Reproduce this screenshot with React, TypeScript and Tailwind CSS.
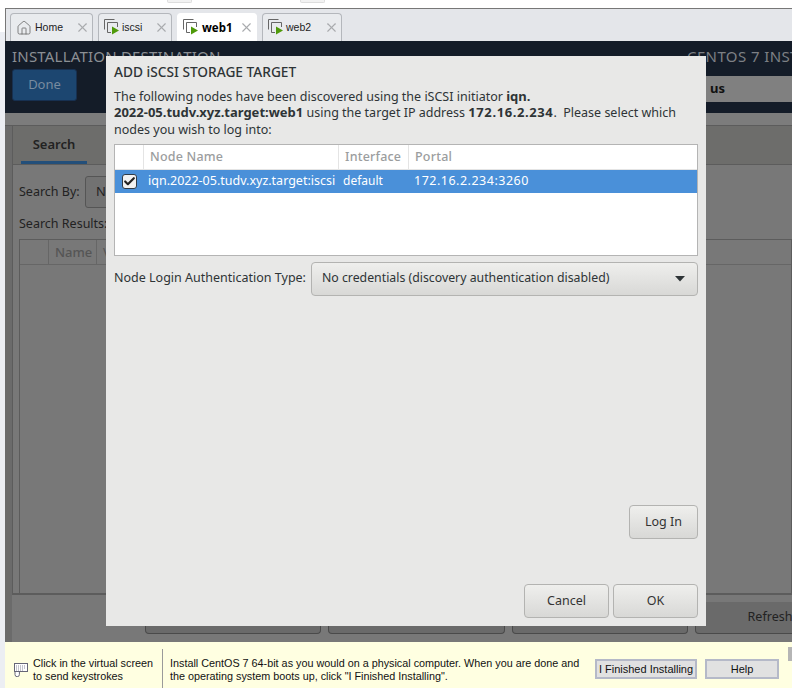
import { Home, X, Check } from 'lucide-react'

const modalFont = { fontFamily: '"Noto Sans", sans-serif' }
const hintFont = { fontFamily: '"Liberation Sans", Arial, sans-serif' }

// VM tab icon: stacked windows with a green play arrow
function VmIcon() {
  return (
    <svg width="17" height="17" viewBox="0 0 17 17" fill="none" className="shrink-0">
      <path d="M0.5 10.5V0.5H10.5" stroke="#666" />
      <path d="M3.5 13.5V3.5H13.5V8" stroke="#666" />
      <path d="M3.5 13.5H7" stroke="#666" />
      <path d="M8 7.5L15 11.5L8 15.5Z" fill="#4f9a0a" />
    </svg>
  )
}

function Tab({ label, active, home, width }: { label: string; active?: boolean; home?: boolean; width: string }) {
  return (
    <div
      className={`flex h-[28px] items-center rounded-t-[4px] border border-b-0 pr-[2px] pl-[5px] ${width} ${
        active ? 'border-white bg-white' : 'border-[#b4b7bc] bg-[#e9ebee]'
      }`}
    >
      {home ? <Home size={16} strokeWidth={1.2} className="mr-[2px] text-[#666]" /> : <VmIcon />}
      {active ? (
        <span className="ml-[2px] text-[11.5px] font-bold text-black">{label}</span>
      ) : (
        <span className="ml-[1px] text-[10.5px] text-[#222]" style={hintFont}>
          {label}
        </span>
      )}
      <X size={15} strokeWidth={1.8} className="ml-auto text-[#a9abae]" />
    </div>
  )
}

function DimButton({ width, label }: { width: string; label?: string }) {
  return (
    <div className={`flex h-[32px] shrink-0 items-center justify-center rounded-b-[4px] border border-t-0 border-[#4a4a4a] bg-[#6a6a6a] text-[12.5px] text-[#222] ${width}`}>
      {label}
    </div>
  )
}

function LightButton({ label, width }: { label: string; width: string }) {
  return (
    <button className={`h-[34px] rounded-[4px] border border-[#b3b3b1] bg-gradient-to-b from-[#efefed] to-[#d8d8d6] text-[12.5px] text-[#333] ${width}`}>
      {label}
    </button>
  )
}

export default function App() {
  return (
    <div className="relative flex h-[688px] w-[792px] overflow-hidden bg-white" style={modalFont}>
      {/* left window strip */}
      <div className="mt-[32px] h-[656px] w-[5px] shrink-0 bg-[#eceef3]" />

      <div className="flex min-w-0 flex-1 flex-col">
        {/* leftovers of the toolbar above */}
        <div className="flex h-2 shrink-0 pl-[162px]">
          <div className="h-[3px] w-[25px] rounded-b-[2px] border border-t-0 border-[#ddd] bg-[#f2f2f2]" />
          <div className="ml-[108px] h-[3px] w-[25px] rounded-b-[2px] border border-t-0 border-[#ddd] bg-[#f2f2f2]" />
        </div>

        {/* tab bar */}
        <div className="flex h-[33px] shrink-0 items-end gap-[5px] border-t border-l border-[#777] bg-[#e4e6ea] pl-[4px]">
          <Tab label="Home" home width="w-[83px]" />
          <Tab label="iscsi" width="w-[74px]" />
          <Tab label="web1" active width="w-[80px]" />
          <Tab label="web2" width="w-[80px]" />
        </div>

        {/* dimmed installer screen */}
        <div className="flex h-[601px] shrink-0 flex-col overflow-hidden bg-[#6b6b6b]">
          <div className="flex h-[72px] shrink-0 bg-[#141c28] pl-[7px]">
            <div className="flex flex-col">
              <div className="mt-[6px] text-[15px] leading-[18px] tracking-[0.2px] whitespace-nowrap text-[#8b8f94]">INSTALLATION DESTINATION</div>
              <div className="mt-[4px] flex h-[32px] w-[65px] items-center justify-center rounded-[3px] border border-[#173050] bg-[#1c4670] text-[13px] text-[#788b9f]">
                Done
              </div>
            </div>
            <div className="ml-auto flex w-[192px] flex-col overflow-hidden pt-[6px]">
              <div className="pl-[87px] text-[15px] leading-[18px] tracking-[0.4px] whitespace-nowrap text-[#7d8085]">CENTOS 7 INST</div>
              <div className="mt-[11px] flex h-[26px] items-center bg-[#808080] pl-[110px] text-[13px] font-bold text-[#111]">us</div>
            </div>
          </div>
          <div className="h-[13px] shrink-0 border-b border-[#5c5c5c] bg-[#7c7c7c]" />

          {/* main spoke content */}
          <div className="flex min-h-0 flex-1 flex-col pl-[7px]">
            <div className="flex min-h-0 flex-1 flex-col border-l border-[#5c5c5c] bg-[#787878]">
              <div className="flex h-[39px] shrink-0 border-b border-[#5c5c5c] bg-[#6d6d6b] pl-[8px]">
                <div className="flex w-[66px] items-center justify-center border-b-[3px] border-[#234f7a] pt-[2px] text-[13px] font-semibold text-[#222]">Search</div>
              </div>
              <div className="flex min-h-0 flex-1 flex-col pl-[6px]">
                <div className="mt-[11px] flex items-center">
                  <span className="mr-[6px] w-[60px] text-[12.5px] whitespace-nowrap text-[#222]">Search By:</span>
                  <div className="flex h-[32px] w-[60px] items-center rounded-[3px] border border-[#555] bg-[#727272] pl-[10px] text-[13px] text-[#222]">N</div>
                </div>
                <div className="mt-[7px] text-[12.5px] leading-[18px] text-[#222]">Search Results:</div>
                <div className="mt-[6px] flex-1 border border-b-0 border-[#5c5c5c] bg-[#787878]">
                  <div className="flex h-[25px] border-b border-[#666]">
                    <div className="w-[29px] border-r border-[#666]" />
                    <div className="w-[48px] border-r border-[#666] pl-[6px] text-[13px] leading-[24px] font-medium text-[#555]">Name</div>
                    <div className="pl-[6px] text-[13px] leading-[24px] text-[#555]">V</div>
                  </div>
                </div>
              </div>
            </div>
            <div className="flex h-[49px] shrink-0 gap-[7px] border-t-2 border-[#5c5c5c] bg-[#787878] pt-[7px] pl-[133px]">
              <DimButton width="w-[176px]" />
              <DimButton width="w-[177px]" />
              <DimButton width="w-[176px]" />
              <DimButton width="w-[150px]" label="Refresh" />
            </div>
          </div>
        </div>

        {/* VMware hint bar */}
        <div className="flex h-[46px] shrink-0 items-center bg-[#ffffe1] pt-[8px] text-[10.8px] leading-[13px] text-[#111]" style={hintFont}>
          <div className="mr-[4px] ml-[8px] shrink-0">
            <svg width="16" height="16" viewBox="0 0 16 16" fill="none">
              <rect x="1.5" y="2.5" width="13" height="8" fill="#fff" stroke="#667" />
              <path d="M3 5h10M3 7h10M3 9h7" stroke="#889" strokeDasharray="1 1" />
              <path d="M2 11v2.5a2.2 2.2 0 0 0 4.4 0V11" fill="#fff" stroke="#667" />
            </svg>
          </div>
          <div className="w-[120px] shrink-0 pt-[2px] whitespace-nowrap">
            Click in the virtual screen
            <br />
            to send keystrokes
          </div>
          <div className="mr-[7px] ml-[9px] h-[39px] w-px shrink-0 self-end bg-[#9a9a9a]" />
          <div className="w-[425px] shrink-0 pt-[2px] whitespace-nowrap">
            Install CentOS 7 64-bit as you would on a physical computer. When you are done and
            <br />
            the operating system boots up, click "I Finished Installing".
          </div>
          <button className="h-[20px] w-[102px] shrink-0 border-2 border-[#b5b9c8] bg-[#e1e1e1] text-[11px] whitespace-nowrap">I Finished Installing</button>
          <button className="ml-[8px] h-[20px] w-[74px] shrink-0 border-2 border-[#b5b9c8] bg-[#e1e1e1] text-[11px]">Help</button>
        </div>
      </div>

      {/* scrollbar stub at the right edge */}
      <div className="absolute top-[647px] right-0 h-[14px] w-[4px] bg-[#b5b5b5]" />

      {/* modal dialog */}
      <div className="absolute top-[56px] left-[106px] flex h-[570px] w-[600px] flex-col bg-[#e8e8e7] px-[8px] text-[#2e3436]">
        <h2 className="mt-[7px] text-[13.7px] leading-[18px] font-medium whitespace-nowrap">ADD iSCSI STORAGE TARGET</h2>
        <p className="mt-[7.5px] h-[50px] text-[12.5px] leading-[16.5px]">
          The following nodes have been discovered using the iSCSI initiator <b className="text-[13px] leading-none">iqn.</b>
          <br />
          <b className="text-[13px] leading-none">2022-05.tudv.xyz.target:web1</b> using the target IP address <b className="text-[13px] leading-none tracking-[0.6px]">172.16.2.234</b>.&nbsp; Please select which
          <br />
          nodes you wish to log into:
        </p>

        <div className="mt-[5px] h-[112px] w-[584px] shrink-0 border border-[#b4b4b4] bg-white">
          <div className="flex h-[25px] border-b border-[#e4e4e4] text-[12.5px] leading-[23px] font-medium tracking-[0.2px] text-[#9b9d9e]">
            <div className="w-[29px] border-r border-[#e4e4e4]" />
            <div className="w-[195px] border-r border-[#e4e4e4] pl-[6px]">Node Name</div>
            <div className="w-[70px] border-r border-[#e4e4e4] pl-[6px]">Interface</div>
            <div className="pl-[6px]">Portal</div>
          </div>
          <div className="flex h-[23px] items-center bg-[#4a90d9] text-[12.5px] text-white">
            <div className="flex w-[29px] justify-center">
              <span className="flex h-[15px] w-[15px] items-center justify-center rounded-[3px] border border-[#2f3b47] bg-[#f2f2f2]">
                <Check size={13} strokeWidth={4} className="text-[#222]" />
              </span>
            </div>
            <div className="w-[195px] pl-[4px] whitespace-nowrap">iqn.2022-05.tudv.xyz.target:iscsi</div>
            <div className="w-[70px] pl-[4px] text-[12px]">default</div>
            <div className="pl-[5px] tracking-[0.5px]">172.16.2.234:3260</div>
          </div>
        </div>

        <div className="mt-[6px] flex items-center">
          <span className="mr-[5px] text-[12.5px] whitespace-nowrap">Node Login Authentication Type:</span>
          <div className="flex h-[34px] flex-1 items-center rounded-[4px] border border-[#b3b3b1] bg-gradient-to-b from-[#efefed] to-[#d8d8d6] pr-[12px] pl-[10px] text-[12.3px]">
            No credentials (discovery authentication disabled)
            <svg width="10" height="6" viewBox="0 0 10 6" className="ml-auto">
              <path d="M0 0h10L5 5.5Z" fill="#2e3436" />
            </svg>
          </div>
        </div>

        <div className="mt-auto flex flex-col items-end">
          <LightButton label="Log In" width="w-[69px]" />
          <div className="mt-[45px] mb-[8px] flex gap-[4px]">
            <LightButton label="Cancel" width="w-[85px]" />
            <LightButton label="OK" width="w-[85px]" />
          </div>
        </div>
      </div>
    </div>
  )
}
